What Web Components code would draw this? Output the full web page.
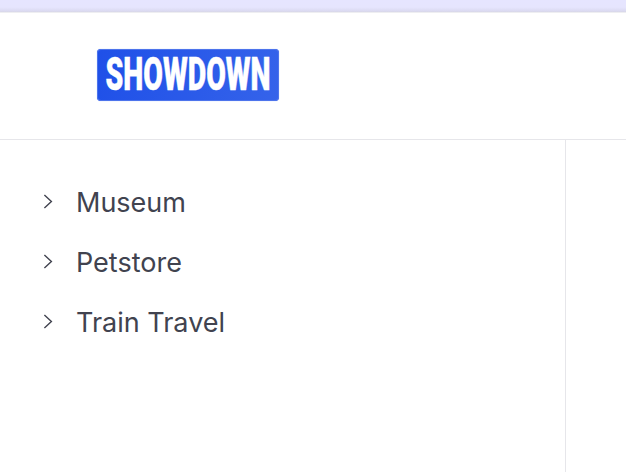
<!DOCTYPE html>
<html><head><meta charset="utf-8"><style>
html,body{margin:0;padding:0;background:#fff;height:100%;overflow:hidden}
body{font-family:Inter,"Liberation Sans",sans-serif}
</style></head><body>
<app-shell>
<top-strip slot="top"></top-strip>
<app-header slot="header"><brand-logo>SHOWDOWN</brand-logo></app-header>
<side-nav slot="side">
<nav-item>Museum</nav-item>
<nav-item>Petstore</nav-item>
<nav-item>Train Travel</nav-item>
</side-nav>
</app-shell>
<script>
function def(name,html){
  customElements.define(name,class extends HTMLElement{
    constructor(){super();this.attachShadow({mode:'open'}).innerHTML=html;}
  });
}
def('app-shell',`<style>:host{display:flex;flex-direction:column;height:472px;width:626px}
.main{flex:1;display:flex;min-height:0}
.rest{flex:1}</style>
<slot name="top"></slot><slot name="header"></slot>
<div class="main"><slot name="side"></slot><div class="rest"></div></div>`);
def('top-strip',`<style>:host{display:block;height:13px;box-sizing:border-box;background:linear-gradient(#e6e5ff 0,#e6e5fe 60%,#dcdbf2 88%,#d8d7e8 100%);border-bottom:1px solid #eeeef1}</style>`);
def('app-header',`<style>:host{display:flex;align-items:flex-start;box-sizing:border-box;height:127px;padding:36px 0 0 97px;border-bottom:1px solid #e6e6ea;background:#fff}</style><slot></slot>`);
def('brand-logo',`<style>:host{display:flex;align-items:center;justify-content:center;box-sizing:border-box;width:182px;height:52px;border-radius:4px;background:linear-gradient(100deg,#1f50e8,#3563ea);box-shadow:inset 0 0 0 1px #4d74ec,0 0 1px #9db2f2}
span{display:inline-block;font:900 28.5px/1 Roboto,"DejaVu Sans",sans-serif;color:#fff;transform:scaleY(1.63);white-space:nowrap;letter-spacing:0;-webkit-text-stroke:.3px #fff}</style><span><slot></slot></span>`);
def('side-nav',`<style>:host{display:flex;flex-direction:column;box-sizing:border-box;width:566px;padding-top:32px;border-right:1px solid #e6e6ea}</style><slot></slot>`);
def('nav-item',`<style>:host{display:flex;align-items:center;height:60px;padding-left:41px;color:#41434f;font:400 27px/1 Inter,"Liberation Sans",sans-serif}
svg{width:14px;height:18px;flex:none;margin:0 21px 0 0}</style>
<svg viewBox="0 0 14 18" fill="none" stroke="#41434f" stroke-width="1.4"><path d="M3.4 2 10.4 8.5 3.4 15"/></svg><span><slot></slot></span>`);
</script></body></html>
